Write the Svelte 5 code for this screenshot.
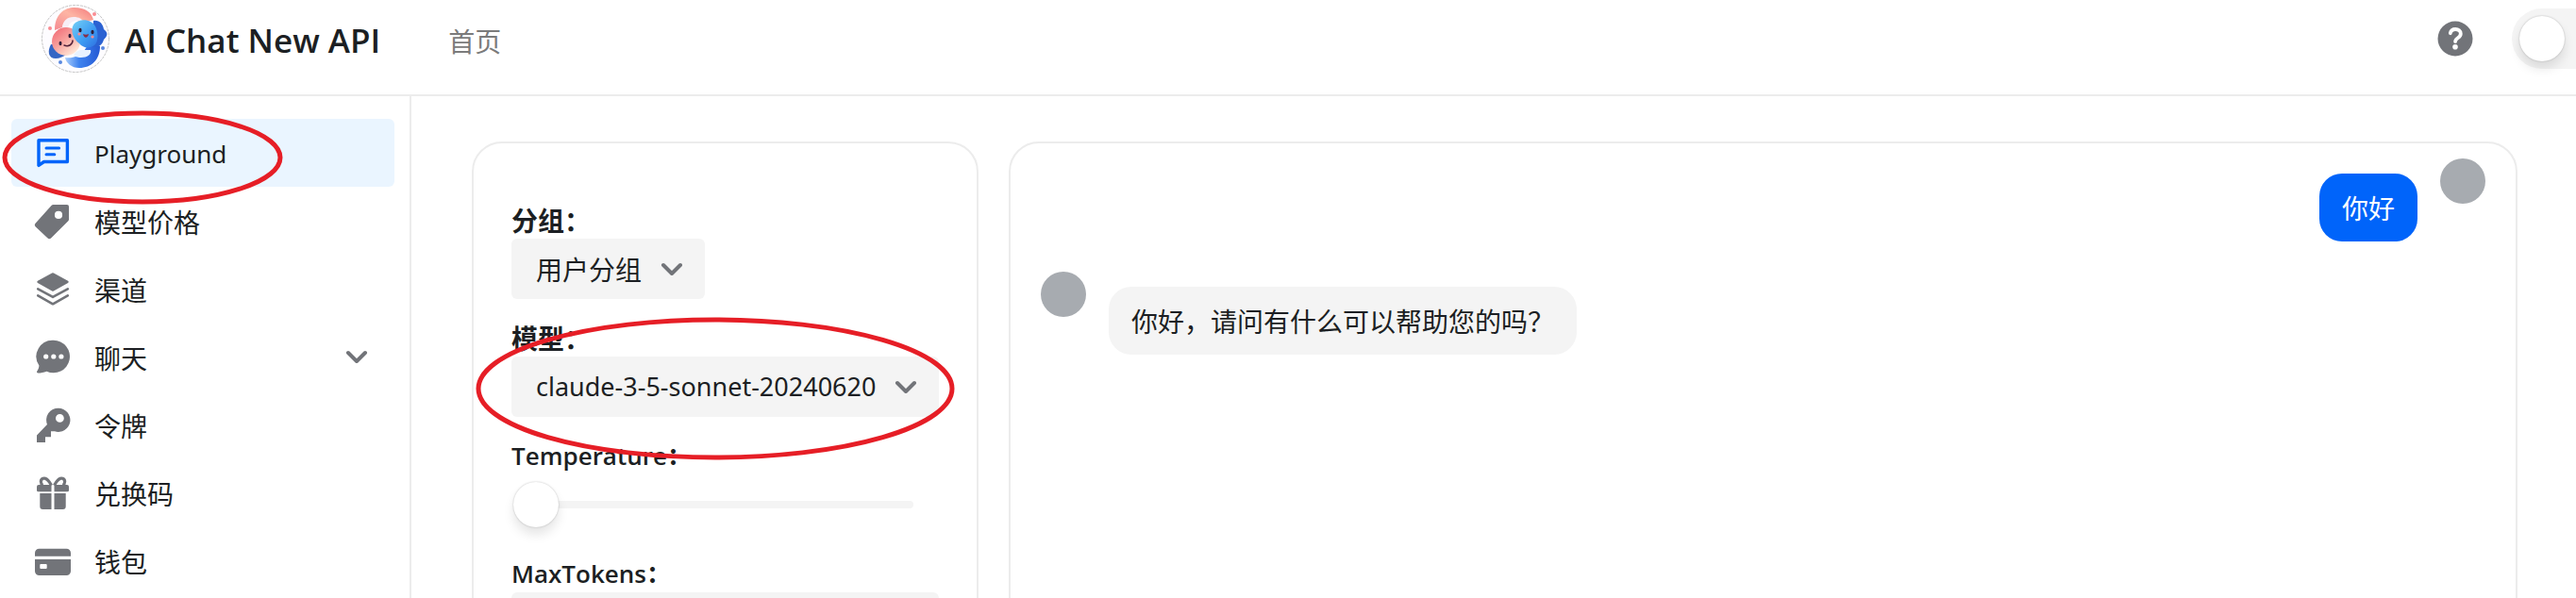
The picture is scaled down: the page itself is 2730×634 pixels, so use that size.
<script>
  const items = [
    { label: 'Playground', icon: 'playground', active: true },
    { label: '模型价格', icon: 'tag' },
    { label: '渠道', icon: 'layers' },
    { label: '聊天', icon: 'chat', expandable: true },
    { label: '令牌', icon: 'key' },
    { label: '兑换码', icon: 'gift' },
    { label: '钱包', icon: 'card' }
  ];

  const messages = [
    { from: 'user', text: '你好' },
    { from: 'bot', text: '你好，请问有什么可以帮助您的吗？' }
  ];

  let temperature = $state(0);
  let maxTokens = $state('');
  let dark = $state(false);
</script>

{#snippet chevron()}
  <svg class="chevron" viewBox="0 0 24 14" aria-hidden="true">
    <path d="M3 3l9 9 9-9" fill="none" stroke="currentColor" stroke-width="4" stroke-linecap="round" stroke-linejoin="round" />
  </svg>
{/snippet}

{#snippet icon(name)}
  <svg class="icon" viewBox="0 0 40 40" fill="currentColor" aria-hidden="true">
    {#if name === 'playground'}
      <path d="M5 33.4V6.7h30.4v22.8H10.6Z" fill="none" stroke="currentColor" stroke-width="3.4" stroke-linejoin="round" />
      <path d="M13 15h13.6M13 21.7h8.8" fill="none" stroke="currentColor" stroke-width="3" stroke-linecap="round" />
    {:else if name === 'tag'}
      <path fill-rule="evenodd" d="M20.5 3H35a2 2 0 0 1 2 2v13.500a3 3 0 0 1-.9 2.100L18.300 38.300a2.800 2.800 0 0 1-4 0L1.800 26.500a2.800 2.800 0 0 1 0-4L18.400 3.900A3 3 0 0 1 20.500 3ZM26 9.800a4.100 4.100 0 1 0 0 8.200 4.100 4.100 0 0 0 0-8.200Z" />
    {:else if name === 'layers'}
      <path d="M19.100 3.400a2 2 0 0 1 1.800 0L36 11.700a1.300 1.300 0 0 1 0 2.300l-15.100 8.500a2 2 0 0 1-1.800 0L4 14a1.300 1.300 0 0 1 0-2.300Z" />
      <path d="M4.200 20.300 20 28.900l15.800-8.600M4.200 27.400 20 36.300l15.800-8.900" fill="none" stroke="currentColor" stroke-width="2.600" stroke-linecap="round" stroke-linejoin="round" />
    {:else if name === 'chat'}
      <path fill-rule="evenodd" d="M20.700 2.700a17.300 17.300 0 1 1-7.300 33c-2.900 1.200-6 1.800-9.200 1.800-1 0-1.600-1.100-.9-1.900 1.400-1.900 2.100-3.900 2.100-6A17.300 17.300 0 0 1 20.700 2.700ZM12.700 17.400a2.600 2.600 0 1 0 0 5.200 2.600 2.600 0 0 0 0-5.200Zm8.100 0a2.600 2.600 0 1 0 0 5.200 2.600 2.600 0 0 0 0-5.200Zm8.100 0a2.600 2.600 0 1 0 0 5.200 2.600 2.600 0 0 0 0-5.200Z" />
    {:else if name === 'key'}
      <path fill-rule="evenodd" d="M26 2.700a12.600 12.600 0 1 1-4 24.600h-4v6h-6V39H3v-7.500L14 20A12.600 12.600 0 0 1 26 2.700Zm1.400 6.300a4.400 4.400 0 1 0 0 8.800 4.400 4.400 0 0 0 0-8.800Z" />
    {:else if name === 'gift'}
      <path d="M18.500 12.500c-3-5.500-6-8-8.700-7.200-3.600 1-2.800 5.900-.4 7.200M21.500 12.500c3-5.500 6-8 8.700-7.200 3.600 1 2.800 5.900.4 7.200" fill="none" stroke="currentColor" stroke-width="3.200" />
      <path d="M5 12h13.500v7.200H4.500A1.500 1.500 0 0 1 3 17.700V14a2 2 0 0 1 2-2ZM21.500 12H35a2 2 0 0 1 2 2v3.700a1.500 1.500 0 0 1-1.500 1.500h-14ZM6.300 21h12.200v17H9.300a3 3 0 0 1-3-3ZM21.500 21h12.200v14a3 3 0 0 1-3 3h-9.200Z" />
    {:else if name === 'card'}
      <path fill-rule="evenodd" d="M5.500 7.700h29a4.500 4.500 0 0 1 4.500 4.500v3.500H1v-3.500a4.500 4.500 0 0 1 4.500-4.500ZM1 19h38v12.500a4.500 4.500 0 0 1-4.500 4.500h-29A4.500 4.500 0 0 1 1 31.500ZM7.300 24a1 1 0 0 0-1 1v3a1 1 0 0 0 1 1h5.400a1 1 0 0 0 1-1v-3a1 1 0 0 0-1-1Z" />
    {/if}
  </svg>
{/snippet}

<div class="app">
  <header>
    <a class="brand" href="#home">
      <svg class="logo" viewBox="0 0 72 72" aria-hidden="true">
        <defs>
          <linearGradient id="ring" x1="0" y1="1" x2="1" y2="0">
            <stop offset="0" stop-color="#f58a92" /><stop offset=".55" stop-color="#fdb5a4" /><stop offset="1" stop-color="#f4777a" />
          </linearGradient>
          <linearGradient id="pink" x1="0" y1="0" x2=".8" y2="1">
            <stop offset="0" stop-color="#f0616f" /><stop offset=".5" stop-color="#f8a29e" /><stop offset="1" stop-color="#fff1df" />
          </linearGradient>
          <linearGradient id="sky" x1="0" y1="0" x2="1" y2="1">
            <stop offset="0" stop-color="#74d0f6" /><stop offset=".6" stop-color="#3c9af2" /><stop offset="1" stop-color="#2f6fe0" />
          </linearGradient>
          <linearGradient id="deep" x1="0" y1="0" x2="1" y2="0">
            <stop offset="0" stop-color="#a9cdfb" /><stop offset=".4" stop-color="#3f83ef" /><stop offset="1" stop-color="#2459d4" />
          </linearGradient>
        </defs>
        <circle cx="36" cy="36" r="35.500" fill="#fdfcff" stroke="#c4c4c4" stroke-dasharray="3 1" />
        <path d="M14 27C14 10 24 3 35 3c11 0 18 5 20 13l-14 4c-5-8-17-7-19 4Z" fill="url(#ring)" />
        <path d="M22 26c0-9 5-13 12-13 6 0 9 2 11 6-7-4-16-2-17 6Z" fill="#f7eef6" />
        <path d="M10 42c-4 7-3 15 5 15 4 0 8-2 11-4L13 42Z" fill="#3566c4" />
        <path d="M25 56c8 1 14-1 20-7l4-6 13 1c0 14-9 23-22 23-8 0-14-5-15-11Z" fill="url(#deep)" />
        <path d="M34 54c2-5 6-6 9-6h9c2 6-9 11-18 6Z" fill="#e8f2ff" />
        <path d="M55 17c6-1 10 3 11 9 5 4 4 7 0 11-2 7-7 9-13 7Z" fill="#2b62d2" />
        <circle cx="26" cy="39" r="15" fill="url(#pink)" />
        <path d="M34 21c6-7 19-6 23 2 3 5 4 16-1 20-5 4-12 3-16-2-6-4-10-14-6-20Z" fill="url(#sky)" />
        <path d="M24 43c5 2 9-1 9-5" fill="none" stroke="#53223a" stroke-linecap="round" stroke-width="1.500" />
        <path d="M44 31c2 1 4 1 6 0-1 5-5 5-6 0Z" fill="#862f48" />
        <g fill="#301e3a">
          <ellipse cx="20" cy="41" rx="1.500" ry="2.200" /><ellipse cx="30" cy="33" rx="1.500" ry="2.200" />
          <ellipse cx="41" cy="27" rx="1.600" ry="2.200" /><ellipse cx="54" cy="29" rx="1.600" ry="2.200" />
        </g>
        <g fill="#f98c93">
          <circle cx="40" cy="31" r="1.600" /><circle cx="54" cy="34" r="1.600" />
          <circle cx="56" cy="10" r="2" /><circle cx="9" cy="25" r="2" />
        </g>
        <g fill="#5a88df"><circle cx="65" cy="46" r="2" /><circle cx="20" cy="61" r="2" /></g>
      </svg>
      <span>AI Chat New API</span>
    </a>
    <a class="home" href="#home">首页</a>
    <div class="actions">
      <button class="help" aria-label="帮助">
        <svg viewBox="0 0 40 40" aria-hidden="true">
          <circle cx="20" cy="20" r="18.500" fill="#727479" />
          <path d="M14.800 14.200c.6-2.900 2.700-4.200 5.400-4.200 3.200 0 5.600 1.900 5.600 4.700 0 4.700-5.700 4.300-5.700 8.300" fill="none" stroke="#fff" stroke-width="3.800" stroke-linecap="round" />
          <circle cx="20" cy="28.800" r="2.800" fill="#fff" />
        </svg>
      </button>
      <input class="switch" type="checkbox" role="switch" aria-label="深色模式" bind:checked={dark} />
    </div>
  </header>

  <div class="body">
    <nav>
      {#each items as item}
        <a class="item" class:active={item.active} href="#{item.icon}">
          {@render icon(item.icon)}
          <span class:latin={item.active}>{item.label}</span>
          {#if item.expandable}{@render chevron()}{/if}
        </a>
      {/each}
      <svg class="mark" viewBox="0 0 298 100" aria-hidden="true">
        <ellipse cx="149" cy="50" rx="146" ry="47" />
      </svg>
    </nav>

    <main>
      <section class="settings">
        <div class="field">
          <label for="group">分组：</label>
          <div class="select">
            <select id="group"><option>用户分组</option></select>
            {@render chevron()}
          </div>
        </div>
        <div class="field">
          <label for="model">模型：</label>
          <div class="select latin-select">
            <select id="model"><option>claude-3-5-sonnet-20240620</option></select>
            {@render chevron()}
          </div>
        </div>
        <div class="field">
          <label for="temperature">Temperature：</label>
          <input id="temperature" type="range" min="0" max="1" step="0.1" bind:value={temperature} />
        </div>
        <div class="field">
          <label for="tokens">MaxTokens：</label>
          <input id="tokens" class="text" type="text" bind:value={maxTokens} />
        </div>
        <svg class="mark" viewBox="0 0 508 152" aria-hidden="true">
          <ellipse cx="254" cy="76" rx="251" ry="73" />
        </svg>
      </section>

      <section class="chat">
        {#each messages as message}
          <div class="message {message.from}">
            <span class="avatar"></span>
            <p>{message.text}</p>
          </div>
        {/each}
      </section>
    </main>
  </div>
</div>

<style>
  :global(body) {
    margin: 0;
    background: #fff;
  }
  .app {
    display: flex;
    flex-direction: column;
    height: 100vh;
    overflow: hidden;
    color: #1c1f23;
    font: 28px/40px "Noto Sans", "Noto Sans CJK SC", sans-serif;
  }
  .app * {
    box-sizing: border-box;
  }
  a {
    color: inherit;
    text-decoration: none;
  }
  select,
  input,
  button {
    margin: 0;
    border: 0;
    appearance: none;
    color: inherit;
    font: inherit;
  }

  header {
    display: flex;
    align-items: center;
    flex: none;
    height: 102px;
    padding: 0 0 18px 44px;
    border-bottom: 2px solid #ececec;
    overflow: hidden;
  }
  .brand {
    display: flex;
    align-items: center;
    gap: 16px;
    font: 600 35px/48px "Open Sans", sans-serif;
  }
  .brand span,
  .home {
    padding-top: 4px;
  }
  .logo {
    width: 72px;
    height: 72px;
  }
  .home {
    margin-left: 72px;
    color: #7b7b7b;
    font-family: "Noto Sans CJK SC", sans-serif;
  }
  .actions {
    display: flex;
    align-items: center;
    gap: 40px;
    margin: 0 -40px 0 auto;
  }
  .help {
    width: 40px;
    height: 40px;
    padding: 0;
    background: none;
  }
  .help svg {
    display: block;
  }
  .switch {
    width: 108px;
    height: 64px;
    padding: 8px;
    border-radius: 32px;
    background: #f4f4f4;
  }
  .switch::before {
    content: "";
    display: block;
    width: 48px;
    height: 48px;
    border-radius: 50%;
    background: #fff;
    box-shadow: 0 8px 12px rgba(0, 0, 0, 0.1), 0 0 2px rgba(0, 0, 0, 0.25);
  }

  .body {
    display: flex;
    flex: 1;
    min-height: 0;
  }
  nav {
    position: relative;
    flex: none;
    width: 436px;
    padding: 24px 16px 0 12px;
    border-right: 2px solid #ececec;
  }
  .item {
    display: flex;
    align-items: center;
    gap: 24px;
    height: 72px;
    padding: 0 28px 0 24px;
    border-radius: 6px;
    font-family: "Noto Sans CJK SC", sans-serif;
  }
  .item span {
    padding-top: 2px;
  }
  .item.active {
    background: #eaf5ff;
  }
  .latin {
    font: 26px/40px "Noto Sans", sans-serif;
  }
  .icon {
    flex: none;
    width: 40px;
    height: 40px;
    color: #727479;
  }
  .active .icon {
    color: #0064fa;
  }
  .chevron {
    width: 24px;
    height: 14px;
    color: #727479;
  }
  .item .chevron {
    margin-left: auto;
  }

  .mark {
    position: absolute;
    pointer-events: none;
    fill: none;
    stroke: #e61e26;
    stroke-width: 5px;
  }
  nav .mark {
    top: 15px;
    left: 2px;
    width: 298px;
  }

  main {
    display: flex;
    flex: 1;
    gap: 32px;
    min-width: 0;
    padding: 48px 62px 0 64px;
  }
  section {
    height: 100%;
    min-height: 600px;
    border: 2px solid #ececec;
    border-radius: 32px;
  }
  .settings {
    position: relative;
    display: flex;
    flex: 0 0 534px;
    flex-direction: column;
    gap: 21px;
    padding: 61px 40px;
  }
  .settings .mark {
    top: 184px;
    left: 2px;
    width: 508px;
  }
  .field {
    display: flex;
    flex: none;
    flex-direction: column;
    align-items: flex-start;
    height: 104px;
  }
  label {
    font: 600 26px/40px "Open Sans", "Noto Sans CJK SC", sans-serif;
  }
  label[for="group"],
  label[for="model"] {
    font: 700 28px/40px "Noto Sans CJK SC", sans-serif;
  }
  .select {
    display: grid;
    align-items: center;
  }
  .select > :global(*) {
    grid-area: 1 / 1;
  }
  select {
    height: 64px;
    padding: 0 66px 0 26px;
    border-radius: 6px;
    background: #f4f4f4;
    font-family: "Noto Sans CJK SC", sans-serif;
  }
  .latin-select select {
    font: 27px/40px "Noto Sans", sans-serif;
  }
  .select .chevron {
    justify-self: end;
    margin-right: 23px;
    pointer-events: none;
  }
  input[type="range"] {
    width: 424px;
    height: 64px;
    margin-left: 2px;
    background: none;
  }
  input[type="range"]::-webkit-slider-runnable-track {
    height: 8px;
    border-radius: 4px;
    background: #f4f4f4;
  }
  input[type="range"]::-webkit-slider-thumb {
    appearance: none;
    width: 48px;
    height: 48px;
    margin-top: -20px;
    border-radius: 50%;
    background: #fff;
    box-shadow: 0 8px 12px rgba(0, 0, 0, 0.1), 0 0 2px rgba(0, 0, 0, 0.25);
  }
  .text {
    flex: none;
    width: 100%;
    height: 64px;
    padding: 0 24px;
    border-radius: 6px;
    background: #f4f4f4;
  }

  .chat {
    display: flex;
    flex: 1;
    flex-direction: column;
    gap: 32px;
    min-width: 0;
    padding: 16px 32px;
    font-family: "Noto Sans CJK SC", sans-serif;
  }
  .message {
    display: flex;
    align-items: flex-start;
    gap: 24px;
  }
  .message.user {
    flex-direction: row-reverse;
  }
  .avatar {
    flex: none;
    width: 48px;
    height: 48px;
    border-radius: 50%;
    background: #a7abb0;
  }
  p {
    margin: 16px 0 0;
    padding: 16px 24px;
    border-radius: 24px;
    background: #f4f4f4;
  }
  .user p {
    background: #0064fa;
    color: #fff;
  }
</style>
